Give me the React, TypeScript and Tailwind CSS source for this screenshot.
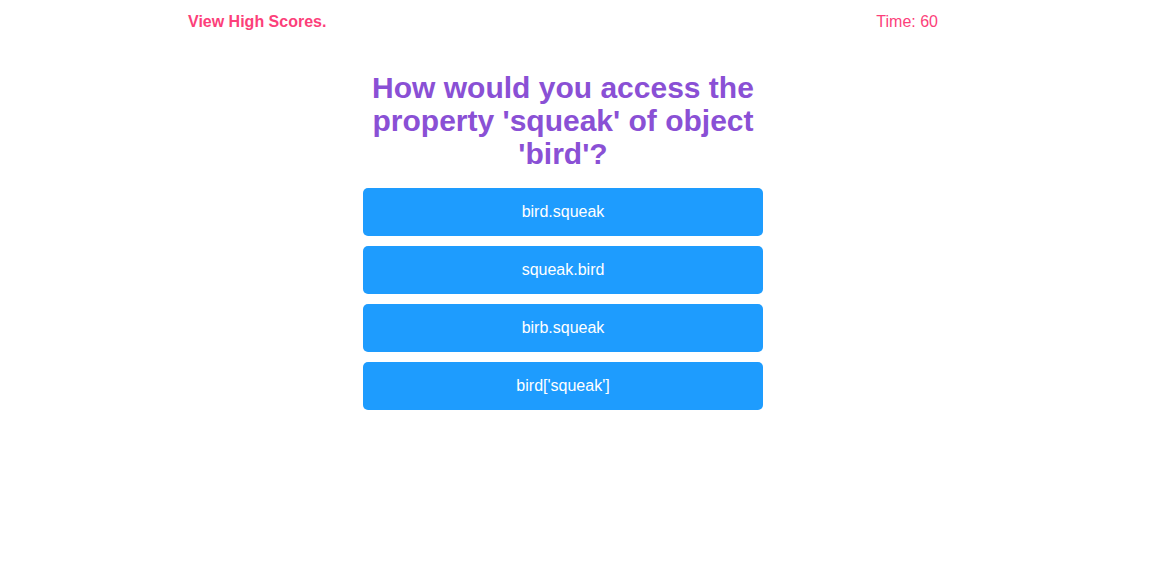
export default function App() {
  const answers = ["bird.squeak", "squeak.bird", "birb.squeak", "bird['squeak']"];
  return (
    <div className="min-h-[577px] bg-white" style={{ fontFamily: '"Liberation Sans", Arial, sans-serif' }}>
      <div className="ml-[188px] w-[750px]">
        <header className="flex justify-between pt-[13px] text-[16px] leading-[18px]">
          <a className="font-bold text-[#fc3f7a]">View High Scores.</a>
          <span className="text-[#fc3f7a]">Time: 60</span>
        </header>
        <main className="mx-auto flex w-[400px] flex-col items-center pt-[40px]">
          <h1 className="text-center text-[30px] font-bold leading-[33px] text-[#8a50d5]">
            How would you access the property 'squeak' of object 'bird'?
          </h1>
          <div className="mt-[18px] flex w-full flex-col gap-[10px]">
            {answers.map((a) => (
              <button
                key={a}
                className="h-[48px] w-full rounded-[5px] bg-[#1e9cfe] text-[16px] text-white"
              >
                {a}
              </button>
            ))}
          </div>
        </main>
      </div>
    </div>
  );
}
